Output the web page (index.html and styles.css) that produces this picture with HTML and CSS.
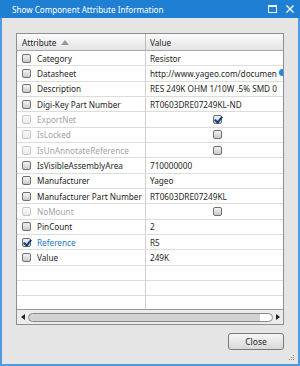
FILE: index.html
```html
<!DOCTYPE html>
<html lang="en">
<head>
    <meta charset="UTF-8">
    <meta name="viewport" content="width=device-width, initial-scale=1.0">
    <title>Show Component Attribute Information</title>
    <link rel="stylesheet" href="styles.css">
</head>
<body>

    <div class="window">
        <div class="titlebar">
            <span class="title">Show Component Attribute Information</span>
            <span class="controls">
                <svg width="9" height="8" viewBox="0 0 9 8"><rect x="0.5" y="0.5" width="8" height="7" fill="none" stroke="#fff" stroke-width="1"/><rect x="0" y="0" width="9" height="2" fill="#fff"/></svg>
                <svg width="8" height="8" viewBox="0 0 8 8"><path d="M0.5 0.5 L7.5 7.5 M7.5 0.5 L0.5 7.5" stroke="#fff" stroke-width="1.4"/></svg>
            </span>
        </div>

        <div class="body">
            <div class="grid">
                <div class="grid-head">
                    <div class="cell attr">Attribute <svg class="sort" width="8" height="5" viewBox="0 0 8 5"><path d="M4 0 L8 5 L0 5 Z" fill="#9a9a9a"/></svg></div>
                    <div class="cell value">Value</div>
                </div>

                <div class="grid-rows">
                    <div class="row"><div class="cell attr"><span class="cb"></span>Category</div><div class="cell value">Resistor</div></div>
                    <div class="row"><div class="cell attr"><span class="cb"></span>Datasheet</div><div class="cell value"><span class="clip">http://www.yageo.com/documen</span><span class="pointer"></span></div></div>
                    <div class="row"><div class="cell attr"><span class="cb"></span>Description</div><div class="cell value"><span class="clip">RES 249K OHM 1/10W .5% SMD 0</span></div></div>
                    <div class="row"><div class="cell attr"><span class="cb"></span>Digi-Key Part Number</div><div class="cell value">RT0603DRE07249KL-ND</div></div>
                    <div class="row disabled"><div class="cell attr"><span class="cb"></span>ExportNet</div><div class="cell value center"><span class="cb checked"></span></div></div>
                    <div class="row disabled"><div class="cell attr"><span class="cb"></span>IsLocked</div><div class="cell value center"><span class="cb"></span></div></div>
                    <div class="row disabled"><div class="cell attr"><span class="cb"></span>IsUnAnnotateReference</div><div class="cell value center"><span class="cb"></span></div></div>
                    <div class="row"><div class="cell attr"><span class="cb"></span>IsVisibleAssemblyArea</div><div class="cell value">710000000</div></div>
                    <div class="row"><div class="cell attr"><span class="cb"></span>Manufacturer</div><div class="cell value">Yageo</div></div>
                    <div class="row"><div class="cell attr"><span class="cb"></span>Manufacturer Part Number</div><div class="cell value">RT0603DRE07249KL</div></div>
                    <div class="row disabled"><div class="cell attr"><span class="cb"></span>NoMount</div><div class="cell value center"><span class="cb"></span></div></div>
                    <div class="row"><div class="cell attr"><span class="cb"></span>PinCount</div><div class="cell value">2</div></div>
                    <div class="row selected"><div class="cell attr"><span class="cb checked"></span>Reference</div><div class="cell value">R5</div></div>
                    <div class="row"><div class="cell attr"><span class="cb"></span>Value</div><div class="cell value">249K</div></div>
                    <div class="row"><div class="cell attr"></div><div class="cell value"></div></div>
                    <div class="row"><div class="cell attr"></div><div class="cell value"></div></div>
                    <div class="row"><div class="cell attr"></div><div class="cell value"></div></div>
                    <div class="row"><div class="cell attr"></div><div class="cell value"></div></div>
                </div>

                <div class="hscroll">
                    <svg width="5" height="6" viewBox="0 0 5 6"><path d="M0 3 L4 0 L4 6 Z" fill="#222"/></svg>
                    <div class="track"><div class="thumb"></div></div>
                    <svg width="5" height="6" viewBox="0 0 5 6"><path d="M5 3 L1 0 L1 6 Z" fill="#222"/></svg>
                </div>
            </div>

            <div class="actions">
                <button class="close-btn">Close</button>
            </div>

            <svg class="grip" width="7" height="7" viewBox="0 0 7 7">
                <rect x="5" y="1" width="1" height="1" fill="#8a8a8a"/>
                <rect x="3" y="3" width="1" height="1" fill="#8a8a8a"/>
                <rect x="5" y="3" width="1" height="1" fill="#8a8a8a"/>
                <rect x="1" y="5" width="1" height="1" fill="#8a8a8a"/>
                <rect x="3" y="5" width="1" height="1" fill="#8a8a8a"/>
                <rect x="5" y="5" width="1" height="1" fill="#8a8a8a"/>
            </svg>
        </div>
    </div>

</body>
</html>
```

FILE: styles.css
```css
body {
    margin: 0;
    font-family: 'Noto Sans', sans-serif;
    font-size: 8.2px;
    color: #1e1e1e;
    background: #fff;
}
.window {
    width: 300px;
    height: 366px;
    display: flex;
    flex-direction: column;
}
.titlebar {
    height: 18px;
    flex: none;
    background: #1f7fd2;
    display: flex;
    align-items: center;
    justify-content: space-between;
    padding: 0 6px 0 12px;
}
.title {
    color: #fff;
    font-size: 8.1px;
}
.controls {
    display: flex;
    gap: 9px;
    align-items: center;
}
.body {
    flex: 1;
    position: relative;
    background: #e5e5e5;
    border: 2px solid #4f9ae0;
    border-top: none;
    padding: 15px 14px 0 14px;
}
.grid {
    width: 268px;
    height: 292px;
    box-sizing: border-box;
    border: 1px solid #8e8e8e;
    background: #fff;
    display: flex;
    flex-direction: column;
}
.grid-head {
    height: 16px;
    flex: none;
    display: flex;
    background: linear-gradient(#fbfbfb, #e4e4e4);
    border-bottom: 1px solid #a9a9a9;
}
.cell {
    box-sizing: border-box;
    display: flex;
    align-items: center;
    white-space: nowrap;
    overflow: hidden;
}
.cell.attr {
    width: 129px;
    flex: none;
    padding-left: 5px;
    border-right: 1px solid #d0d0d0;
}
.cell.value {
    flex: 1;
    padding-left: 4px;
    position: relative;
}
.cell.value.center {
    justify-content: center;
}
.grid-head .cell.attr {
    border-right-color: #bcbcbc;
}
.sort {
    margin-left: 5px;
}
.grid-rows {
    flex: 1;
    overflow: hidden;
}
.row {
    height: 15.33px;
    box-sizing: border-box;
    display: flex;
    border-bottom: 1px solid #dcdcdc;
}
.clip {
    overflow: hidden;
}
.cb {
    width: 9px;
    height: 9px;
    box-sizing: border-box;
    flex: none;
    border: 1px solid #707070;
    border-radius: 2px;
    background: linear-gradient(#f4f4f4, #c9c9c9);
    margin-right: 6px;
    position: relative;
}
.cell.value .cb {
    margin-right: 0;
    margin-left: 2px;
}
.cb.checked::after {
    content: '';
    position: absolute;
    left: 2px;
    top: -1px;
    width: 3px;
    height: 6px;
    border: solid #123f86;
    border-width: 0 2px 2px 0;
    transform: rotate(40deg);
}
.disabled .attr {
    color: #a4a4a4;
}
.disabled .attr .cb {
    opacity: 0.4;
}
.selected .attr {
    color: #2a73c8;
}
.pointer {
    position: absolute;
    right: -3px;
    top: 3px;
    width: 7px;
    height: 7px;
    border-radius: 50%;
    background: #1e88e0;
}
.hscroll {
    height: 14px;
    flex: none;
    display: flex;
    align-items: center;
    gap: 2px;
    padding: 0 3px 0 4px;
    border-top: 1px solid #9a9a9a;
    background: #ececec;
}
.track {
    flex: 1;
    height: 9px;
}
.thumb {
    height: 9px;
    box-sizing: border-box;
    border: 1px solid #8a8a8a;
    border-radius: 5px;
    background: linear-gradient(to right, #d2d2d2 95%, #fff 95%);
}
.actions {
    display: flex;
    justify-content: flex-end;
    width: 268px;
    margin-top: 8px;
}
.close-btn {
    width: 56px;
    height: 17px;
    padding: 0;
    font-family: 'Noto Sans', sans-serif;
    font-size: 8.5px;
    color: #1e1e1e;
    border: 1px solid #7a7a7a;
    border-radius: 3px;
    background: linear-gradient(#f6f6f6, #d9d9d9);
}
.grip {
    position: absolute;
    right: 3px;
    bottom: 3px;
}
```
